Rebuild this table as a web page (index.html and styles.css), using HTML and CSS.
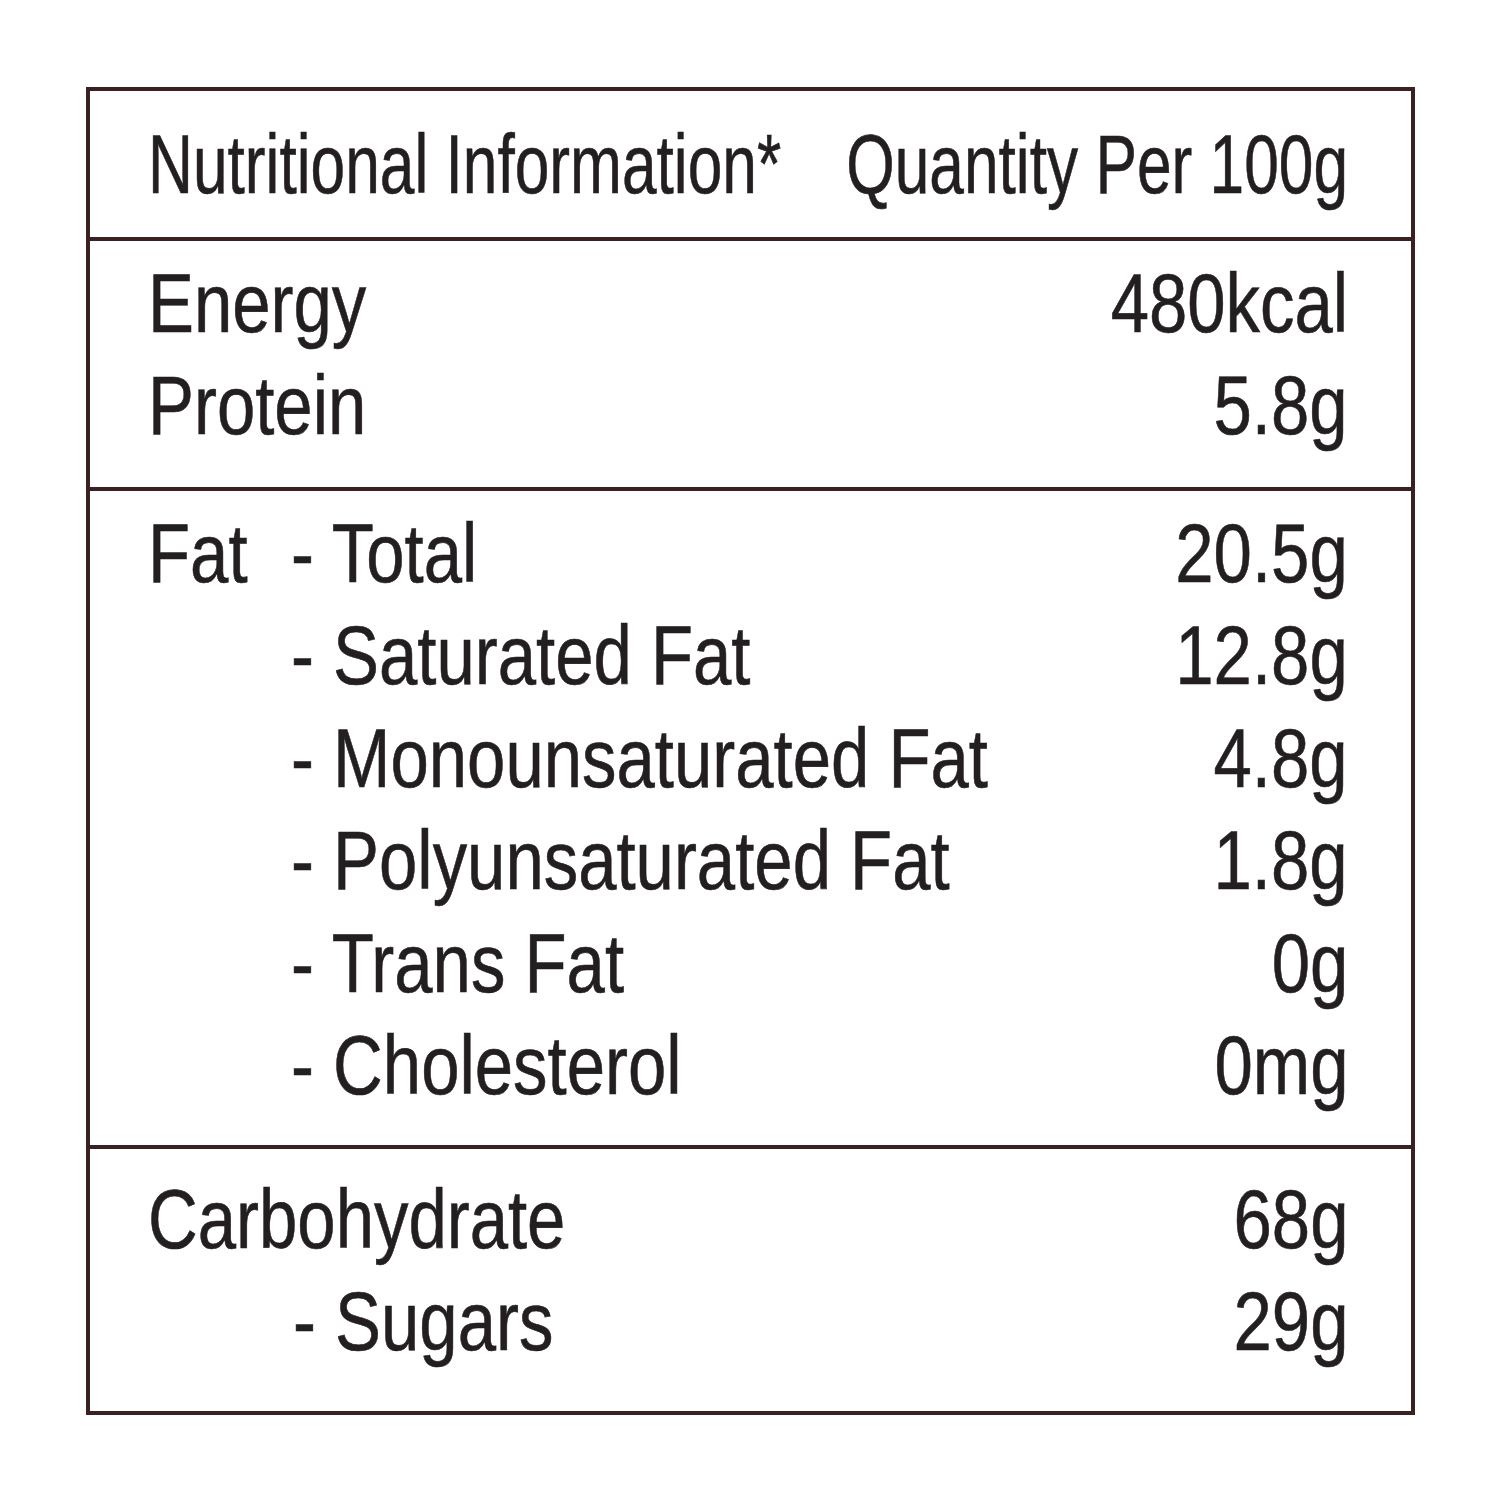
FILE: index.html
```html
<!DOCTYPE html>
<html lang="en">
<head>
    <meta charset="UTF-8">
    <meta name="viewport" content="width=device-width, initial-scale=1.0">
    <title>Nutritional Information</title>
    <link rel="stylesheet" href="styles.css">
</head>
<body>
    <div class="panel">
        <!-- header -->
        <div class="section head">
            <div class="row">
                <span class="txt narrow">Nutritional Information*</span>
                <span class="qty"><span class="txt narrow">Quantity Per 100g</span></span>
            </div>
        </div>

        <div class="section s-energy">
            <div class="row">
                <span class="txt">Energy</span>
                <span class="qty"><span class="txt">480kcal</span></span>
            </div>
            <div class="row">
                <span class="txt">Protein</span>
                <span class="qty"><span class="txt">5.8g</span></span>
            </div>
        </div>

        <div class="section s-fat">
            <div class="row">
                <span class="group"><span class="txt">Fat</span></span>
                <span class="txt">- Total</span>
                <span class="qty"><span class="txt">20.5g</span></span>
            </div>
            <div class="row sub">
                <span class="txt">- Saturated Fat</span>
                <span class="qty"><span class="txt">12.8g</span></span>
            </div>
            <div class="row sub">
                <span class="txt">- Monounsaturated Fat</span>
                <span class="qty"><span class="txt">4.8g</span></span>
            </div>
            <div class="row sub">
                <span class="txt">- Polyunsaturated Fat</span>
                <span class="qty"><span class="txt">1.8g</span></span>
            </div>
            <div class="row sub">
                <span class="txt">- Trans Fat</span>
                <span class="qty"><span class="txt">0g</span></span>
            </div>
            <div class="row sub">
                <span class="txt">- Cholesterol</span>
                <span class="qty"><span class="txt">0mg</span></span>
            </div>
        </div>

        <div class="section s-carb">
            <div class="row">
                <span class="txt">Carbohydrate</span>
                <span class="qty"><span class="txt">68g</span></span>
            </div>
            <div class="row sub">
                <span class="txt">- Sugars</span>
                <span class="qty"><span class="txt">29g</span></span>
            </div>
        </div>
    </div>
</body>
</html>
```

FILE: styles.css
```css
body {
    margin: 0;
    padding: 87px 0 0 86px;
    background-color: white;
    font-family: "Liberation Sans", Arial, sans-serif;
    color: #231f20;
}
.panel {
    width: 1321px;
    border: 4px solid #3b2121;
}
.section {
    padding: 12px 63px 29px 58px;
    border-top: 4px solid #3b2121;
}
.section.head {
    border-top: none;
    padding-top: 23px;
    padding-bottom: 20px;
}
.s-fat {
    padding-bottom: 27px;
}
.s-carb {
    padding-top: 20px;
    padding-bottom: 37px;
}
.row {
    display: flex;
    align-items: baseline;
    font-size: 83px;
    line-height: 102.5px;
    white-space: nowrap;
}
.row.sub {
    padding-left: 143px;
}
.s-carb .row.sub {
    padding-left: 145px;
}
.txt {
    display: inline-block;
    flex: none;
    transform: scaleX(0.83);
    transform-origin: left center;
    -webkit-text-stroke: 0.6px #231f20;
}
.txt.narrow {
    transform: scaleX(0.75);
}
.group {
    width: 143px;
    flex: none;
}
.qty {
    flex: 1 1 0;
    min-width: 0;
    display: flex;
    justify-content: flex-end;
}
.qty .txt {
    transform-origin: right center;
}
```
